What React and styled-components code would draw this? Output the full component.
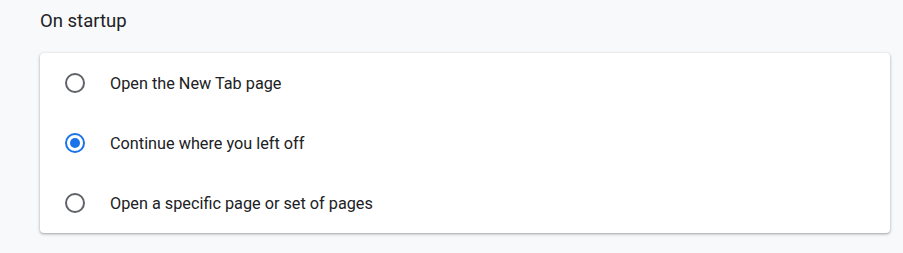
import React, { useState } from "react";
import styled, { createGlobalStyle } from "styled-components";

const Global = createGlobalStyle`
  html, body { margin: 0; padding: 0; background: #f8f9fa; }
  body { font-family: Roboto, "Noto Sans", Arial, sans-serif; color: #202124; }
`;

const Page = styled.div`
  padding: 9px 13px 20px 40px;
`;

const Heading = styled.h2`
  margin: 0 0 20px 0;
  font-size: 18.5px;
  font-weight: 400;
  line-height: 24px;
  color: #202124;
`;

const Card = styled.div`
  background: #fff;
  border-radius: 4px;
  box-shadow: 0 1px 2px rgba(60, 64, 67, 0.3), 0 1px 3px 1px rgba(60, 64, 67, 0.15);
  display: flex;
  flex-direction: column;
`;

const Row = styled.label`
  display: flex;
  align-items: center;
  height: 60px;
  padding-left: 25px;
  gap: 25px;
  cursor: pointer;
`;

const Radio = styled.span`
  box-sizing: border-box;
  width: 20px;
  height: 20px;
  border-radius: 50%;
  border: 2.5px solid ${(p) => (p.$checked ? "#1a73e8" : "#5f6368")};
  display: flex;
  align-items: center;
  justify-content: center;
  flex-shrink: 0;
  &::after {
    content: "";
    width: 10px;
    height: 10px;
    border-radius: 50%;
    background: #1a73e8;
    display: ${(p) => (p.$checked ? "block" : "none")};
  }
`;

const Label = styled.span`
  font-size: 16.25px;
  line-height: 20px;
  padding-top: 1px;
  color: #202124;
`;

const options = [
  "Open the New Tab page",
  "Continue where you left off",
  "Open a specific page or set of pages",
];

export default function App() {
  const [sel, setSel] = useState(1);
  return (
    <Page>
      <Global />
      <Heading>On startup</Heading>
      <Card>
        {options.map((o, i) => (
          <Row key={o} onClick={() => setSel(i)}>
            <Radio $checked={sel === i} />
            <Label>{o}</Label>
          </Row>
        ))}
      </Card>
    </Page>
  );
}
